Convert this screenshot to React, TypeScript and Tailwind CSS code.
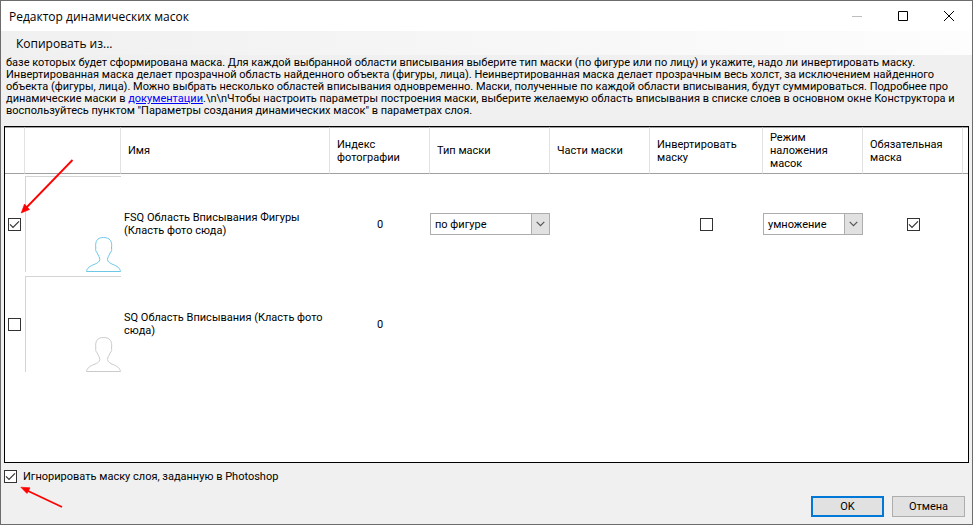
import React, { useState } from 'react';
import clsx from 'clsx';

interface Layer {
  id: string;
  name: string;
  index: number;
  selected: boolean;
  maskType?: string;
  invert?: boolean;
  blend?: string;
  required?: boolean;
}

const initialLayers: Layer[] = [
  {
    id: 'fsq',
    name: 'FSQ Область Вписывания Фигуры (Класть фото сюда)',
    index: 0,
    selected: true,
    maskType: 'по фигуре',
    invert: false,
    blend: 'умножение',
    required: true
  },
  {
    id: 'sq',
    name: 'SQ Область Вписывания (Класть фото сюда)',
    index: 0,
    selected: false
  }
];

const headers = [
  '',
  '',
  'Имя',
  'Индекс фотографии',
  'Тип маски',
  'Части маски',
  'Инвертировать маску',
  'Режим наложения масок',
  'Обязательная маска',
  ''
];

interface CheckboxProps {
  checked: boolean;
  onChange: (checked: boolean) => void;
  id?: string;
  label?: string;
}

const Checkbox: React.FC<CheckboxProps> = ({ checked, onChange, id, label }) => (
  <span className="relative block size-[13px] shrink-0">
    <input
      type="checkbox"
      id={id}
      aria-label={label}
      checked={checked}
      onChange={(e) => onChange(e.target.checked)}
      className="block size-[13px] appearance-none border border-[#333333] bg-white"
    />
    {checked && (
      <svg viewBox="0 0 13 13" className="pointer-events-none absolute inset-0 size-[13px]" aria-hidden="true">
        <path d="M2 6.300 5 9.300 11 3.300" fill="none" stroke="#333333" strokeWidth="1.2" />
      </svg>
    )}
  </span>
);

interface SelectProps {
  value: string;
  options: string[];
  label: string;
}

const Select: React.FC<SelectProps> = ({ value, options, label }) => (
  <div className="relative h-[22px] w-full">
    <select
      aria-label={label}
      defaultValue={value}
      className="block h-full w-full appearance-none border border-[#adadad] bg-white pl-1 text-[11px] text-black"
    >
      {options.map((option) => (
        <option key={option}>{option}</option>
      ))}
    </select>
    <span className="pointer-events-none absolute inset-y-0 right-0 flex w-[19px] items-center justify-center border border-[#adadad] bg-[#e1e1e1]">
      <svg viewBox="0 0 9 6" className="h-[6px] w-[9px]" aria-hidden="true">
        <path d="M.7.8 4.5 4.6 8.3.8" fill="none" stroke="#555555" strokeWidth="1.2" />
      </svg>
    </span>
  </div>
);

const Thumbnail: React.FC<{ active: boolean }> = ({ active }) => (
  <div className="flex h-24 w-24 items-end justify-end border-t border-l border-[#d4d4d4]">
    <svg viewBox="0 0 35 35" className="size-[35px]" aria-hidden="true">
      <path
        d="M.5 34.500C1 31 4 29 8 27.500C11.500 26.200 13.500 25 13.800 22.500C14 20.500 12 18.500 11.300 16C9.800 14.500 9.300 13 9.800 11C9 4.500 11 .5 17.500.5C24 .5 26.500 4.500 25.500 11C26 13 25.500 14.500 24 16C23.300 18.500 21.300 20.500 21.500 22.500C21.800 25 24 26.200 27 27.500C31 29 34 31 34.500 34.500Z"
        fill="none"
        strokeWidth="1"
        className={clsx(active ? 'stroke-[#6cc8e4]' : 'stroke-[#cbcbcb]')}
      />
    </svg>
  </div>
);

const TitleBar = () => (
  <header className="flex h-[30px] items-center justify-between bg-white pl-2">
    <h1 className="font-['Open_Sans','Noto_Sans',sans-serif] text-[12px]">Редактор динамических масок</h1>
    <div className="flex h-full">
      <button type="button" aria-label="Свернуть" className="flex w-[46px] items-center justify-center">
        <svg viewBox="0 0 10 10" className="size-[10px]" aria-hidden="true">
          <path d="M0 5.500H10" stroke="#bdbdbd" />
        </svg>
      </button>
      <button type="button" aria-label="Развернуть" className="flex w-[46px] items-center justify-center">
        <svg viewBox="0 0 10 10" className="size-[10px]" aria-hidden="true">
          <path d="M.5.5H9.500V9.500H.5Z" fill="none" stroke="#000" />
        </svg>
      </button>
      <button type="button" aria-label="Закрыть" className="flex w-[46px] items-center justify-center">
        <svg viewBox="0 0 10 10" className="size-[10px]" aria-hidden="true">
          <path d="M0 0 10 10M10 0 0 10" stroke="#000" />
        </svg>
      </button>
    </div>
  </header>
);

const Description = () => (
  <p className="pt-[2px] pb-[9px] pl-[5px] leading-3 whitespace-nowrap">
    базе которых будет сформирована маска. Для каждой выбранной области вписывания выберите тип маски (по фигуре или
    по лицу) и укажите, надо ли инвертировать маску.
    <br />
    Инвертированная маска делает прозрачной область найденного объекта (фигуры, лица). Неинвертированная маска делает
    прозрачным весь холст, за исключением найденного
    <br />
    объекта (фигуры, лица). Можно выбрать несколько областей вписывания одновременно. Маски, полученные по каждой
    области вписывания, будут суммироваться. Подробнее про
    <br />
    динамические маски в{' '}
    <a href="#docs" className="text-[#0000ff] underline">
      документации
    </a>
    .\n\nЧтобы настроить параметры построения маски, выберите желаемую область вписывания в списке слоев в основном
    окне Конструктора и
    <br />
    воспользуйтесь пунктом "Параметры создания динамических масок" в параметрах слоя.
  </p>
);

const App: React.FC = () => {
  const [layers, setLayers] = useState(initialLayers);
  const [ignoreMask, setIgnoreMask] = useState(true);

  const update = (id: string, patch: Partial<Layer>) => {
    setLayers((prev) => prev.map((layer) => (layer.id === id ? { ...layer, ...patch } : layer)));
  };

  return (
    <div className="relative flex min-h-screen flex-col border border-[#6d6b6d] bg-[#f0f0f0] font-['Roboto','Liberation_Sans',sans-serif] text-[11px] leading-[13px] text-black">
      <TitleBar />
      <nav className="flex h-6 items-center bg-linear-to-r from-[#f0f0f0] to-[#fdfdfd] pl-[15px]">
        <button type="button" className="font-['Open_Sans','Noto_Sans',sans-serif] text-[12px]">
          Копировать из...
        </button>
      </nav>
      <Description />

      <main className="mx-[3px] flex-1 border border-black bg-white">
        <table className="w-full table-fixed border-separate border-spacing-0">
          <colgroup>
            <col className="w-5" />
            <col className="w-24" />
            <col className="w-[209px]" />
            <col className="w-[100px]" />
            <col className="w-[120px]" />
            <col className="w-[100px]" />
            <col className="w-[113px]" />
            <col className="w-[100px]" />
            <col className="w-[100px]" />
            <col />
          </colgroup>
          <thead>
            <tr className="h-[47px]">
              {headers.map((header, i) => (
                <th
                  key={i}
                  className={clsx(
                    'border-y border-y-[#a0a0a0] p-0 text-left align-middle font-normal',
                    header && 'pl-[7px]',
                    i < headers.length - 1 && 'border-r border-r-[#e2e2e2]'
                  )}
                >
                  {header}
                </th>
              ))}
            </tr>
          </thead>
          <tbody>
            {layers.map((layer) => (
              <tr key={layer.id} className="h-[100px]">
                <td className="p-0 pl-[3px]">
                  <Checkbox
                    checked={layer.selected}
                    onChange={(selected) => update(layer.id, { selected })}
                    label={layer.name}
                  />
                </td>
                <td className="p-0">
                  <Thumbnail active={layer.selected} />
                </td>
                <td className="p-0 pr-1 pl-[3px]">{layer.name}</td>
                <td className="p-0 text-center">{layer.index}</td>
                <td className="p-0">
                  {layer.maskType && (
                    <Select value={layer.maskType} options={['по фигуре', 'по лицу']} label="Тип маски" />
                  )}
                </td>
                <td className="p-0" />
                <td className="p-0">
                  {layer.invert !== undefined && (
                    <div className="flex justify-center">
                      <Checkbox
                        checked={layer.invert}
                        onChange={(invert) => update(layer.id, { invert })}
                        label="Инвертировать маску"
                      />
                    </div>
                  )}
                </td>
                <td className="p-0">
                  {layer.blend && (
                    <Select value={layer.blend} options={['умножение', 'сложение']} label="Режим наложения масок" />
                  )}
                </td>
                <td className="p-0">
                  {layer.required !== undefined && (
                    <div className="flex justify-center">
                      <Checkbox
                        checked={layer.required}
                        onChange={(required) => update(layer.id, { required })}
                        label="Обязательная маска"
                      />
                    </div>
                  )}
                </td>
                <td className="p-0" />
              </tr>
            ))}
          </tbody>
        </table>
      </main>

      <footer className="px-[3px] pt-[7px] pb-[7px]">
        <div className="flex items-center gap-[6px]">
          <Checkbox id="ignore-mask" checked={ignoreMask} onChange={setIgnoreMask} />
          <label htmlFor="ignore-mask">Игнорировать маску слоя, заданную в Photoshop</label>
        </div>
        <div className="mt-[13px] flex justify-end gap-2 pr-1">
          <button type="button" className="h-[21px] w-[73px] border-2 border-[#0078d7] bg-[#e1e1e1]">
            OK
          </button>
          <button type="button" className="h-[21px] w-[73px] border border-[#adadad] bg-[#e1e1e1]">
            Отмена
          </button>
        </div>
      </footer>

      {/* pointers to the two checkboxes */}
      <svg viewBox="0 0 54 56" className="pointer-events-none absolute top-[157px] left-[19px] h-[56px] w-[54px]" aria-hidden="true">
        <path d="M52.500 2 6 50" stroke="#ff0000" strokeWidth="1.8" />
        <path d="M1.200 55 4.500 46 9.500 51.500Z" fill="#ff0000" stroke="#ff0000" strokeWidth=".6" />
      </svg>
      <svg viewBox="0 0 44 24" className="pointer-events-none absolute bottom-[14px] left-[19px] h-[24px] w-[44px]" aria-hidden="true">
        <path d="M42 21 6 4" stroke="#ff0000" strokeWidth="1.8" />
        <path d="M.8 1.200 10 1.800 7 7.500Z" fill="#ff0000" stroke="#ff0000" strokeWidth=".6" />
      </svg>
    </div>
  );
};

export default App;
